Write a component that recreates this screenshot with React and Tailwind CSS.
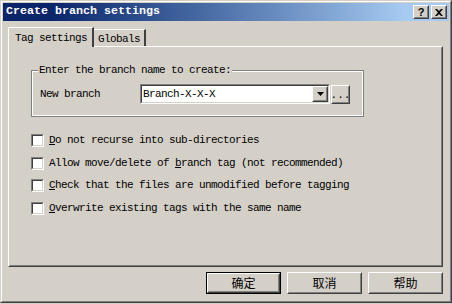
import React from "react";

const mono = { fontFamily: '"Liberation Mono", "Noto Sans CJK SC", monospace' };

function Raised({ className = "", children }) {
  return (
    <div className={"border border-t-white border-l-white border-r-[#404040] border-b-[#404040] " + className}>
      <div className="w-full h-full border border-t-[#d4d0c8] border-l-[#d4d0c8] border-r-[#808080] border-b-[#808080] flex items-center justify-center">
        {children}
      </div>
    </div>
  );
}

function Check({ children }) {
  return (
    <div className="flex items-center h-[13px]">
      <div className="w-[13px] h-[13px] border border-t-[#808080] border-l-[#808080] border-r-white border-b-white">
        <div className="w-full h-full border border-t-[#404040] border-l-[#404040] border-r-[#d4d0c8] border-b-[#d4d0c8] bg-white" />
      </div>
      <span className="ml-[5px] text-[11px] tracking-[-0.6px] text-black leading-none">{children}</span>
    </div>
  );
}

function Btn({ label, def }) {
  const inner = (
    <Raised className="w-full h-full">
      <span className="text-[12px] text-black" style={{ fontFamily: '"Noto Sans CJK SC", sans-serif' }}>{label}</span>
    </Raised>
  );
  if (def) {
    return <div className="w-[75px] h-[22px] border border-black">{inner}</div>;
  }
  return <div className="w-[75px] h-[22px]">{inner}</div>;
}

export default function App() {
  return (
    <div className="w-[452px] h-[304px] bg-[#d4d0c8] overflow-hidden" style={mono}>
      <div className="w-[452px] h-[303px] border border-t-[#d4d0c8] border-l-[#d4d0c8] border-r-[#404040] border-b-[#404040]">
        <div className="w-full h-full border border-t-white border-l-white border-r-[#808080] border-b-[#808080] p-[1px] flex flex-col">
          {/* title bar */}
          <div className="h-[18px] flex items-center pl-[3px] pr-[2px] bg-gradient-to-r from-[#0a246a] from-10% to-[#a6caf0] to-90%">
            <span className="text-white font-bold text-[11.67px] leading-none">Create branch settings</span>
            <div className="ml-auto flex gap-[1px]">
              <Raised className="w-[16px] h-[14px] bg-[#d4d0c8]">
                <span className="text-[11px] font-bold leading-none text-black" style={{ fontFamily: '"Liberation Sans", sans-serif' }}>?</span>
              </Raised>
              <Raised className="w-[16px] h-[14px] bg-[#d4d0c8] ml-[1px]">
                <svg width="8" height="7" viewBox="0 0 8 7">
                  <path d="M0 0h2l2 2 2-2h2L5 3.5 8 7H6L4 5 2 7H0l3-3.5z" fill="black" />
                </svg>
              </Raised>
            </div>
          </div>

          {/* tabs */}
          <div className="pl-[5px] pr-[6px] pt-[5px] flex flex-col">
            <div className="flex items-end h-[20px] relative z-10">
              <div className="h-[20px] w-[86px] bg-[#d4d0c8] border-t border-l border-t-white border-l-white border-r-2 border-r-[#404040] pl-[6px] pt-[5px] -mb-[1px] flex items-start">
                <span className="text-[11px] tracking-[-0.6px] leading-none text-black">Tag settings</span>
              </div>
              <div className="h-[17px] w-[52px] border-t border-t-white border-r-2 border-r-[#404040] pl-[4px] pt-[4px] flex items-start">
                <span className="text-[11px] tracking-[-0.6px] leading-none text-black">Globals</span>
              </div>
            </div>
            <div className="h-[221px] border border-t-white border-l-white border-r-[#404040] border-b-[#404040]">
              <div className="w-full h-full border border-t-[#d4d0c8] border-l-[#d4d0c8] border-r-[#808080] border-b-[#808080] pl-[21px] pt-[22px]">
                {/* group box */}
                <div className="relative w-[333px] h-[47px] border border-[#808080]">
                  <div className="w-full h-full border border-white" />
                  <span className="absolute -top-[6px] left-[6px] px-[1px] bg-[#d4d0c8] text-[11px] tracking-[-0.6px] leading-none text-black">Enter the branch name to create:</span>
                  <div className="absolute left-[8px] top-[13px] flex items-center">
                    <span className="w-[100px] text-[11px] tracking-[-0.6px] leading-none text-black">New branch</span>
                    <div className="w-[190px] h-[20px] border border-t-[#808080] border-l-[#808080] border-r-white border-b-white">
                      <div className="w-full h-full border border-t-[#404040] border-l-[#404040] border-r-[#d4d0c8] border-b-[#d4d0c8] bg-white flex items-center pl-[1px]">
                        <span className="text-[11px] tracking-[-0.6px] leading-none text-black">Branch-X-X-X</span>
                        <Raised className="ml-auto w-[16px] h-[16px] bg-[#d4d0c8]">
                          <svg width="7" height="4" viewBox="0 0 7 4"><path d="M0 0h7L3.5 4z" fill="black" /></svg>
                        </Raised>
                      </div>
                    </div>
                    <Raised className="ml-[1px] w-[19px] h-[19px] bg-[#d4d0c8]">
                      <span className="text-[11px] leading-none text-black mt-[3px]">...</span>
                    </Raised>
                  </div>
                </div>

                <div className="mt-[17px] flex flex-col gap-[9.7px]">
                  <Check><u>D</u>o not recurse into sub-directories</Check>
                  <Check>Allow move/delete of <u>b</u>ranch tag (not recommended)</Check>
                  <Check><u>C</u>heck that the files are unmodified before tagging</Check>
                  <Check><u>O</u>verwrite existing tags with the same name</Check>
                </div>
              </div>
            </div>
          </div>

          {/* buttons */}
          <div className="flex justify-end gap-[6px] pr-[6px] mt-[5px]">
            <Btn label="确定" def />
            <Btn label="取消" />
            <Btn label="帮助" />
          </div>
        </div>
      </div>
    </div>
  );
}
